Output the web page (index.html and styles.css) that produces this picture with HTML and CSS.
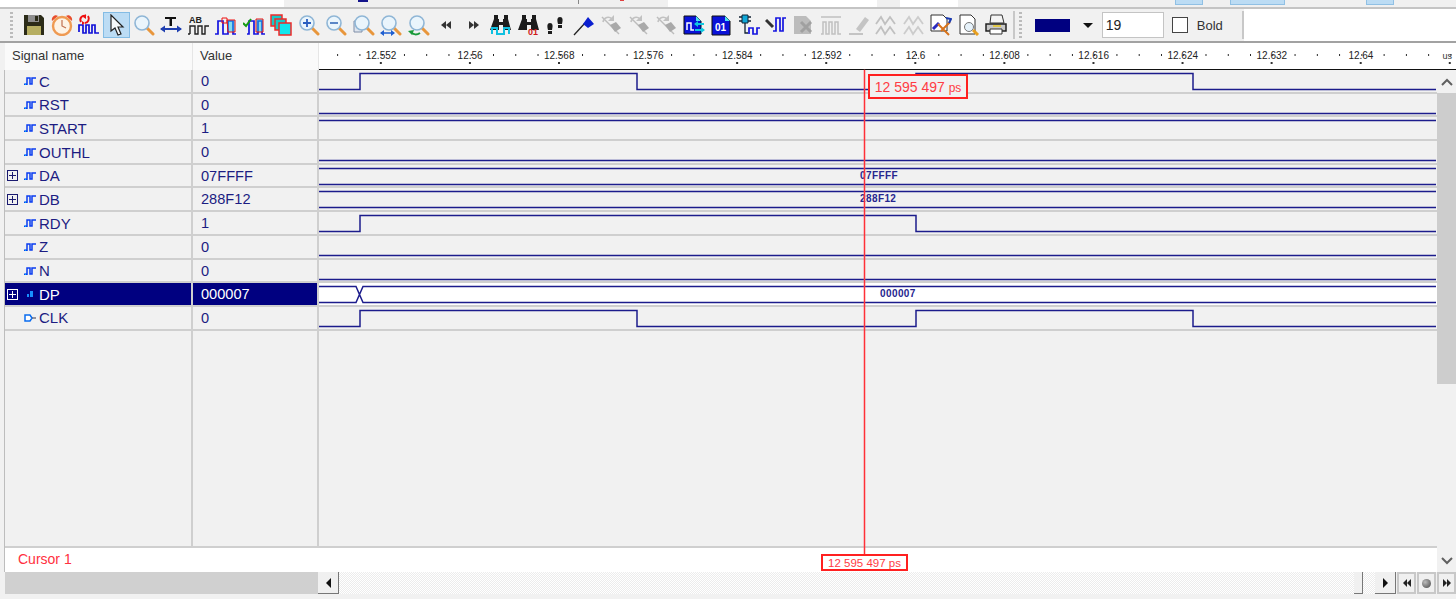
FILE: index.html
```html
<!DOCTYPE html>
<html lang="en">
<head>
  <meta charset="UTF-8" />
  <title>Waveform viewer</title>
  <link rel="stylesheet" href="styles.css">
</head>
<body>

<!-- shared icon parts -->
<svg class="defs" width="0" height="0">
  <symbol id="glass" viewBox="0 0 22 22">
    <path d="M14 14l6 6" stroke="#e8963c" stroke-width="3" stroke-linecap="round"/>
    <circle cx="9" cy="9" r="7" fill="#eaf5fc" stroke="#8fb6d6" stroke-width="1.6"/>
  </symbol>
  <symbol id="binoc" viewBox="0 0 22 22">
    <path d="M4 1h4v4h1v3h4V5h1V1h4v4l3 11H13v-5H9v5H0L4 5z" fill="#1c1c1c"/>
  </symbol>
  <symbol id="grayflag" viewBox="0 0 22 22">
    <path d="M2 3l17 17" stroke="#bdbdbd" stroke-width="1.500"/>
    <path d="M10 11l6-3 5 6-6 4z" fill="#a9a9a9"/>
    <path d="M3 8c1-5 6-6 9-3" fill="none" stroke="#c2c2c2" stroke-width="1.600"/>
    <path d="M14 1v6h-6z" fill="#c2c2c2"/>
  </symbol>
  <symbol id="zig" viewBox="0 0 22 22">
    <path d="M1 10l5-7 4 7 5-7 5 7M1 20l5-7 4 7 5-7 5 7" fill="none" stroke="#c0c0c0" stroke-width="1.800"/>
  </symbol>
  <symbol id="sig" viewBox="0 0 12 8">
    <path d="M0 7.200h3V1h3v6h2V1h4M3 1v6" fill="none" stroke="#0a3cf0" stroke-width="1.500"/>
    <path d="M1 7.200h1" stroke="#00b4ff" stroke-width="1.500"/>
  </symbol>
</svg>

<div class="app">
  <div class="topstrip">
    <div class="seg-white seg-first"></div>
    <div class="seg-gray seg-mid"><i class="speck"></i><i class="speck-line"></i><i class="speck-red"></i></div>
    <div class="seg-white seg-wide"></div>
    <div class="seg-gray seg-gap"></div>
    <div class="seg-white seg-small"></div>
    <div class="seg-gray seg-rest">
      <i class="hi hi-a"></i><i class="hi hi-b"></i><i class="hi hi-c"></i>
    </div>
  </div>

  <div class="toolbar">
    <div class="grip"></div>
    <div class="tools">
      <button class="tool"><svg viewBox="0 0 22 22"><path d="M1 1h17l3 3v17H1z" fill="#2b2b18"/><path d="M5 1h11v7H5z" fill="#8e8e8e"/><path d="M12 2h3v5h-3z" fill="#2b2b18"/><path d="M4 12h14v9H4z" fill="#b6ae62"/></svg></button>
      <button class="tool"><svg viewBox="0 0 22 22"><path d="M1 7c-1-4 3-7 6-5zM21 7c1-4-3-7-6-5z" fill="#e84e2c"/><circle cx="11" cy="12" r="9" fill="#fdf3e6" stroke="#ef9a52" stroke-width="2.400"/><path d="M11 6v6l4 2" fill="none" stroke="#c07050" stroke-width="1.200"/></svg></button>
      <button class="tool"><svg viewBox="0 0 22 22"><path d="M1 18V11h4v8h3v-8h3v8h3v-8h3v8h4" fill="none" stroke="#1010d8" stroke-width="1.700"/><path d="M3 8c-2-4 1-7 5-6M10 2c2 3 0 7-3 7" fill="none" stroke="#ee1111" stroke-width="2"/><path d="M8 0v5l-3-2zM4 7v4l3-2z" fill="#ee1111"/></svg></button>
      <button class="tool tool-on"><svg viewBox="0 0 22 22"><path d="M6 1v16l4-3 3 7 3-1-3-7h5z" fill="#f4f8fb" stroke="#222" stroke-width="1.200"/></svg></button>
      <button class="tool"><svg viewBox="0 0 22 22"><use href="#glass"/></svg></button>
      <button class="tool"><svg viewBox="0 0 22 22"><path d="M5 3h11v2h-4v7H9.500V5H5z" fill="#111"/><path d="M1 15h20" stroke="#1f3fb0" stroke-width="2"/><path d="M0 15l5-3.500v7zM22 15l-5-3.500v7z" fill="#1f3fb0"/></svg></button>
      <button class="tool"><svg viewBox="0 0 22 22"><text x="1" y="9" class="ico-text">AB</text><path d="M2 20v-8h5v8h3v-8h4v8h3v-8h4M0 20h2" fill="none" stroke="#222" stroke-width="1.400"/></svg></button>
      <button class="tool"><svg viewBox="0 0 22 22"><path d="M0 20h3V7h5v13h5V7h5v13h3" fill="none" stroke="#1414e0" stroke-width="1.700"/><path d="M7 4h5v5H7z" fill="none" stroke="#ee1111" stroke-width="1"/><path d="M12 6h8v12h-7z" fill="#18c8e8" fill-opacity=".5" stroke="#ee1111"/></svg></button>
      <button class="tool"><svg viewBox="0 0 22 22"><path d="M4 20h2V7h5v13h4V7h4v13h3" fill="none" stroke="#1414e0" stroke-width="1.700"/><path d="M0 9l3 3 5-7" fill="none" stroke="#149a14" stroke-width="2"/><path d="M13 5h7v13h-7z" fill="#18c8e8" fill-opacity=".5" stroke="#ee1111"/></svg></button>
      <button class="tool"><svg viewBox="0 0 22 22"><path d="M1 1h11v11H1z" fill="#18c8c8" stroke="#ee2a2a" stroke-width="1.500"/><path d="M5 5h11v11H5z" fill="#18c8c8" stroke="#ee2a2a" stroke-width="1.500"/><path d="M9 9h12v12H9z" fill="#12e6ee" stroke="#ee2a2a" stroke-width="1.500"/></svg></button>
      <button class="tool"><svg viewBox="0 0 22 22"><use href="#glass"/><path d="M5 9h8M9 5v8" stroke="#2a5fc0" stroke-width="1.800"/></svg></button>
      <button class="tool"><svg viewBox="0 0 22 22"><use href="#glass"/><path d="M5 9h8" stroke="#4a7ac0" stroke-width="1.800"/></svg></button>
      <button class="tool"><svg viewBox="0 0 22 22"><path d="M1 7h8v11H1z" fill="#dfe5ee" stroke="#7e8ea8"/><use href="#glass"/></svg></button>
      <button class="tool"><svg viewBox="0 0 22 22"><use href="#glass"/><path d="M1 19h13" stroke="#1f5fd0" stroke-width="1.500"/><path d="M0 19l4-3v6zM15 19l-4-3v6z" fill="#1f5fd0"/></svg></button>
      <button class="tool"><svg viewBox="0 0 22 22"><use href="#glass"/><path d="M3 18c2 3 6 3 9 1" fill="none" stroke="#1a9a3a" stroke-width="2"/><path d="M0 17l6-1-2 5z" fill="#1a9a3a"/></svg></button>
      <button class="tool"><svg viewBox="0 0 22 22"><path d="M11 7v8l-5-4zM16 7v8l-5-4z" fill="#333"/></svg></button>
      <button class="tool"><svg viewBox="0 0 22 22"><path d="M6 7v8l5-4zM11 7v8l5-4z" fill="#333"/></svg></button>
      <button class="tool"><svg viewBox="0 0 22 22"><use href="#binoc"/><path d="M2 20v-6h5v6h7v-6h5v6" fill="none" stroke="#10c0e0" stroke-width="2"/></svg></button>
      <button class="tool"><svg viewBox="0 0 22 22"><use href="#binoc"/><text x="10" y="20.500" class="ico-red">01</text></svg></button>
      <button class="tool"><svg viewBox="0 0 22 22"><path d="M5 9c3 0 3 3 2 7H3c-1-4-1-7 2-7zM3 17h4v3H3zM15 3c3 0 3 3 2 7h-4c-1-4-1-7 2-7zM13 11h4v3h-4z" fill="#1c1c1c"/></svg></button>
      <button class="tool"><svg viewBox="0 0 22 22"><path d="M1 21L12 9" stroke="#222" stroke-width="1.300"/><path d="M10 10l5-7 6 7-6 4z" fill="#0b1fd0"/></svg></button>
      <button class="tool"><svg viewBox="0 0 22 22"><use href="#grayflag"/></svg></button>
      <button class="tool"><svg viewBox="0 0 22 22"><use href="#grayflag"/></svg></button>
      <button class="tool"><svg viewBox="0 0 22 22"><use href="#grayflag"/></svg></button>
      <button class="tool"><svg viewBox="0 0 22 22"><path d="M1 2h12l5 5v13H1z" fill="#0a12d8" stroke="#111"/><path d="M4 16v-7h4v7h3" fill="none" stroke="#fff" stroke-width="1.500"/><path d="M12 10h9M12 16h9" stroke="#10c8e0" stroke-width="2"/><path d="M11 10l4-3v6zM22 16l-4-3v6z" fill="#10c8e0"/><path d="M13 2v5h5z" fill="#50e0f0"/></svg></button>
      <button class="tool"><svg viewBox="0 0 22 22"><path d="M2 2h13l5 5v14H2z" fill="#0a12d8" stroke="#111"/><path d="M15 2v5h5z" fill="#50e0f0"/><text x="5" y="17" class="ico-white">01</text></svg></button>
      <button class="tool"><svg viewBox="0 0 22 22"><path d="M4 1h6v8H4z" fill="#10a8d8" stroke="#123"/><path d="M1 3h3M1 7h3M10 3h3M10 7h3M7 9v10h3" fill="none" stroke="#123" stroke-width="1.300"/><path d="M11 20v-6h4v6h4v-6h3" fill="none" stroke="#1414e0" stroke-width="1.700"/></svg></button>
      <button class="tool"><svg viewBox="0 0 22 22"><path d="M1 6l7 7" stroke="#333" stroke-width="3"/><path d="M8 17h3V4h4v13h3V4h3" fill="none" stroke="#1414e0" stroke-width="1.700"/></svg></button>
      <button class="tool"><svg viewBox="0 0 22 22"><path d="M1 2h12l5 5v13H1z" fill="#bcbcbc"/><path d="M8 8l10 10M18 8L8 18" stroke="#a0a0a0" stroke-width="3"/></svg></button>
      <button class="tool"><svg viewBox="0 0 22 22"><path d="M1 3h20M1 20h2V8h3v12h3V8h3v12h3V8h3v12h3" fill="none" stroke="#c0c0c0" stroke-width="1.500"/></svg></button>
      <button class="tool"><svg viewBox="0 0 22 22"><path d="M8 15L17 3l4 3-9 12z" fill="#c4c4c4"/><path d="M1 20h14" stroke="#c4c4c4" stroke-width="2"/></svg></button>
      <button class="tool"><svg viewBox="0 0 22 22"><use href="#zig"/></svg></button>
      <button class="tool"><svg viewBox="0 0 22 22"><use href="#zig" opacity=".75"/></svg></button>
      <button class="tool"><svg viewBox="0 0 22 22"><path d="M1 1h12l4 4v12H1z" fill="#fff" stroke="#333"/><path d="M3 15l6-6" stroke="#2a2ac0" stroke-width="3"/><path d="M8 10l11 11M20 8l-9 9" stroke="#d8741c" stroke-width="2"/><path d="M16 4l5 1-2 4" fill="none" stroke="#1a3ab0" stroke-width="2"/></svg></button>
      <button class="tool"><svg viewBox="0 0 22 22"><path d="M2 1h11l4 4v15H2z" fill="#fff" stroke="#333"/><circle cx="11" cy="13" r="4.500" fill="#e6f2fa" stroke="#777"/><path d="M15 16l5 5" stroke="#e8a020" stroke-width="3"/></svg></button>
      <button class="tool"><svg viewBox="0 0 22 22"><path d="M6 1h11l2 8H5z" fill="#f4f4f4" stroke="#333"/><path d="M1 10h20v7H1z" fill="#c8c8c8" stroke="#222" stroke-width="1.500"/><path d="M5 15h12v5H5z" fill="#fff" stroke="#333"/><path d="M8 12h8" stroke="#e8c820" stroke-width="1.500"/></svg></button>
    </div>
    <div class="sep"></div>
    <div class="grip grip-2"></div>
    <div class="swatch"></div>
    <div class="drop"></div>
    <div class="size-box">19</div>
    <div class="check"></div>
    <div class="check-label">Bold</div>
    <div class="sep sep-end"></div>
    <div class="bar-blank"></div>
  </div>
  <div class="band"></div>

  <div class="head">
    <div class="hcell hname">Signal name</div>
    <div class="hcell hvalue">Value</div>
    <div class="ruler">
      <div class="ruler-labels">
        <span>12.552</span><span>12.56</span><span>12.568</span><span>12.576</span>
        <span>12.584</span><span>12.592</span><span>12.6</span><span>12.608</span>
        <span>12.616</span><span>12.624</span><span>12.632</span><span>12.64</span>
      </div>
      <span class="unit">us</span>
    </div>
  </div>

  <div class="middle">
    <div class="rows">
      <div class="row">
        <div class="name"><i class="noex"></i><svg class="sig"><use href="#sig"/></svg>C</div>
        <div class="val">0</div>
        <div class="wave"><svg viewBox="0 0 1118 22"><path d="M0 19.500H41V3.500H318V19.500H597V3.500H874V19.500H1117"/></svg></div>
      </div>
      <div class="row">
        <div class="name"><i class="noex"></i><svg class="sig"><use href="#sig"/></svg>RST</div>
        <div class="val">0</div>
        <div class="wave"><svg viewBox="0 0 1118 22"><path d="M0 19.500H1117"/></svg></div>
      </div>
      <div class="row">
        <div class="name"><i class="noex"></i><svg class="sig"><use href="#sig"/></svg>START</div>
        <div class="val">1</div>
        <div class="wave"><svg viewBox="0 0 1118 22"><path d="M0 3.500H1117"/></svg></div>
      </div>
      <div class="row">
        <div class="name"><i class="noex"></i><svg class="sig"><use href="#sig"/></svg>OUTHL</div>
        <div class="val">0</div>
        <div class="wave"><svg viewBox="0 0 1118 22"><path d="M0 19.500H1117"/></svg></div>
      </div>
      <div class="row">
        <div class="name"><i class="ex"></i><svg class="sig"><use href="#sig"/></svg>DA</div>
        <div class="val">07FFFF</div>
        <div class="wave"><svg viewBox="0 0 1118 22"><path d="M0 3.500H1117M0 19.500H1117"/><text x="541" y="14">07FFFF</text></svg></div>
      </div>
      <div class="row">
        <div class="name"><i class="ex"></i><svg class="sig"><use href="#sig"/></svg>DB</div>
        <div class="val">288F12</div>
        <div class="wave"><svg viewBox="0 0 1118 22"><path d="M0 3.500H1117M0 19.500H1117"/><text x="541" y="14">288F12</text></svg></div>
      </div>
      <div class="row">
        <div class="name"><i class="noex"></i><svg class="sig"><use href="#sig"/></svg>RDY</div>
        <div class="val">1</div>
        <div class="wave"><svg viewBox="0 0 1118 22"><path d="M0 19.500H41V3.500H597V19.500H1117"/></svg></div>
      </div>
      <div class="row">
        <div class="name"><i class="noex"></i><svg class="sig"><use href="#sig"/></svg>Z</div>
        <div class="val">0</div>
        <div class="wave"><svg viewBox="0 0 1118 22"><path d="M0 19.500H1117"/></svg></div>
      </div>
      <div class="row">
        <div class="name"><i class="noex"></i><svg class="sig"><use href="#sig"/></svg>N</div>
        <div class="val">0</div>
        <div class="wave"><svg viewBox="0 0 1118 22"><path d="M0 19.500H1117"/></svg></div>
      </div>
      <div class="row row-sel">
        <div class="name"><i class="ex"></i><svg class="sig-bus" viewBox="0 0 12 8"><path d="M3 4h2v3H3zM6 1h3v6H6z" fill="#1890ff"/></svg>DP</div>
        <div class="val">000007</div>
        <div class="wave"><svg viewBox="0 0 1118 22"><path d="M0 3.500H37L44 19.500H1117M0 19.500H37L44 3.500H1117"/><text x="561" y="14">000007</text></svg></div>
      </div>
      <div class="row">
        <div class="name"><i class="noex"></i><svg class="sig" viewBox="0 0 12 8"><path d="M1 1h5l2 3-2 3H1z" fill="#fff" stroke="#0a6cf0" stroke-width="1.500"/><path d="M8 4h4" stroke="#556" stroke-width="1.200"/></svg>CLK</div>
        <div class="val">0</div>
        <div class="wave"><svg viewBox="0 0 1118 22"><path d="M0 19.500H41V3.500H318V19.500H597V3.500H874V19.500H1117"/></svg></div>
      </div>
      <div class="filler">
        <div class="name"></div>
        <div class="val"></div>
        <div class="wave"></div>
      </div>
      <div class="cursor-row">Cursor 1</div>
    </div>

    <div class="vscroll">
      <div class="vbtn"><svg viewBox="0 0 12 8"><path d="M1 7l5-5 5 5" /></svg></div>
      <div class="vthumb"></div>
      <div class="vtrack"></div>
      <div class="vbtn"><svg viewBox="0 0 12 8"><path d="M1 1l5 5 5-5" /></svg></div>
    </div>

    <div class="cursor-line"></div>
    <div class="flag flag-top">12 595 497 <small>ps</small></div>
    <div class="flag flag-bottom">12 595 497 ps</div>
  </div>

  <div class="hscroll">
    <div class="hleft"></div>
    <div class="sbtn"><i class="arrow-l"></i></div>
    <div class="htrack"><div class="hthumb"></div></div>
    <div class="sbtn"><i class="arrow-r"></i></div>
    <div class="nav"><i class="arrow-s-l"></i><i class="arrow-s-l"></i></div>
    <div class="nav"><i class="ball"></i></div>
    <div class="nav"><i class="arrow-s-r"></i><i class="arrow-s-r"></i></div>
  </div>
  <div class="foot"></div>
</div>
</body>
</html>
```

FILE: styles.css
```css
html, body {
  margin: 0;
  height: 100%;
  overflow: hidden;
}
body {
  background: #f1f1f1;
  font-family: "Liberation Sans", Arial, sans-serif;
  color: #1c1c82;
}
.defs {
  position: absolute;
}
.app {
  display: flex;
  flex-direction: column;
  width: 1456px;
  height: 599px;
}

/* strip of the toolbar row above, cut off by the window */
.topstrip {
  display: flex;
  height: 7px;
  flex: none;
  border-bottom: 2px solid #c4c4c4;
}
.seg-white { background: #fff; }
.seg-gray { background: #f0f0f0; position: relative; }
.seg-first { width: 284px; }
.seg-mid { width: 384px; }
.seg-wide { width: 209px; }
.seg-gap { width: 23px; }
.seg-small { width: 58px; }
.seg-rest { flex: 1; position: relative; }
.speck {
  position: absolute;
  left: 74px;
  top: 0;
  width: 10px;
  height: 2px;
  background: #14148c;
}
.speck-line {
  position: absolute;
  left: 294px;
  top: 0;
  width: 1px;
  height: 4px;
  background: #888;
}
.speck-red {
  position: absolute;
  left: 336px;
  top: 0;
  width: 4px;
  height: 1px;
  background: #e04040;
}
.hi {
  position: absolute;
  top: 0;
  height: 4px;
  background: #bcdcf4;
  border: 1px solid #90c0e4;
  border-top: none;
}
.hi-a { left: 217px; width: 26px; }
.hi-b { left: 272px; width: 53px; }
.hi-c { left: 408px; width: 26px; }

/* toolbar */
.toolbar {
  display: flex;
  align-items: center;
  height: 32px;
  flex: none;
  padding-left: 10px;
}
.grip {
  width: 3px;
  height: 26px;
  background: repeating-linear-gradient(#bbb 0 2px, transparent 2px 4px);
}
.tools {
  display: flex;
  margin-left: 7.300px;
}
.tool {
  width: 27.490px;
  height: 26px;
  padding: 0;
  border: 1px solid transparent;
  background: none;
  display: flex;
  align-items: center;
  justify-content: center;
}
.tool svg {
  width: 22px;
  height: 22px;
  display: block;
  flex: none;
}
.tool-on {
  background: #bcdcf4;
  border-color: #84bce4;
}
.ico-text {
  font: 700 9px "Liberation Sans", sans-serif;
  fill: #222;
}
.ico-red {
  font: 700 9px "Liberation Sans", sans-serif;
  fill: #d01818;
}
.ico-white {
  font: 700 10px "Liberation Sans", sans-serif;
  fill: #fff;
}
.sep {
  width: 2px;
  height: 28px;
  margin-left: 3px;
  background: #c8c8c8;
}
.grip-2 {
  margin-left: 4px;
}
.swatch {
  width: 35px;
  height: 13px;
  margin-left: 13px;
  background: #000080;
}
.drop {
  width: 0;
  height: 0;
  margin-left: 13px;
  border-left: 5px solid transparent;
  border-right: 5px solid transparent;
  border-top: 5px solid #111;
}
.size-box {
  width: 57px;
  height: 24px;
  margin-left: 9px;
  padding-left: 3px;
  background: #fff;
  border: 1px solid #c4c4c4;
  font-size: 14px;
  line-height: 24px;
  color: #222;
}
.check {
  width: 14px;
  height: 14px;
  margin-left: 8px;
  background: #fff;
  border: 1px solid #444;
}
.check-label {
  margin-left: 9px;
  font-size: 13px;
  color: #333;
}
.sep-end {
  margin-left: 19px;
  margin-right: 0;
}
.bar-blank {
  flex: 1;
  height: 32px;
  background: #fff;
}
.band {
  height: 2px;
  flex: none;
  background: #a2a2a2;
}

/* header + ruler */
.head {
  display: flex;
  height: 27px;
  flex: none;
  padding-left: 5px;
}
.hcell {
  font-size: 13px;
  line-height: 26px;
  color: #333;
  background: #fafafa;
  border-right: 1px solid #e6e6e6;
}
.hname {
  width: 180px;
  padding-left: 7px;
}
.hvalue {
  width: 118px;
  padding-left: 7px;
}
.ruler {
  flex: 1;
  display: flex;
  justify-content: space-between;
  background-color: #fff;
  background-image:
    radial-gradient(circle, #222 0 1px, transparent 1px),
    radial-gradient(circle, #333 0 1px, transparent 1px);
  background-size: 22.270px 2px, 89.090px 2px;
  background-repeat: repeat-x;
  background-position: 7.500px 11px, 17.300px 19px;
  border-bottom: 1px solid #111;
  box-sizing: border-box;
}
.ruler-labels {
  display: flex;
  padding-left: 17.500px;
}
.ruler-labels span {
  width: 89.090px;
  text-align: center;
  font-size: 10px;
  line-height: 25px;
  color: #222;
  white-space: nowrap;
}
.unit {
  font-size: 9px;
  line-height: 27px;
  padding-right: 4px;
  color: #333;
}

/* rows */
.middle {
  position: relative;
  display: flex;
  flex: 1;
  min-height: 0;
  padding-left: 4px;
}
.middle::before {
  content: "";
  width: 1px;
  background: #bdbdbd;
}
.rows {
  flex: 1;
  display: flex;
  flex-direction: column;
}
.row, .filler {
  display: grid;
  grid-template-columns: 188px 126px 1fr;
  box-sizing: border-box;
  flex: none;
}
.row {
  height: 23.700px;
  border-bottom: 2px solid #cfcfcf;
}
.filler {
  flex: 1;
  border-bottom: 2px solid #cfcfcf;
}
.name {
  display: flex;
  align-items: center;
  padding-left: 2px;
  font-size: 15px;
  border-right: 2px solid #cfcfcf;
}
.val {
  padding-left: 8px;
  font-size: 14.600px;
  line-height: 22px;
  border-right: 2px solid #cfcfcf;
}
.ex, .noex {
  display: block;
  box-sizing: border-box;
  width: 11px;
  height: 11px;
  flex: none;
  margin-right: 6px;
}
.ex {
  border: 1px solid #1a1a70;
  background:
    linear-gradient(#1a1a70, #1a1a70) center / 7px 1px no-repeat,
    linear-gradient(#1a1a70, #1a1a70) center / 1px 7px no-repeat;
}
.sig, .sig-bus {
  width: 12px;
  height: 8px;
  flex: none;
  margin-right: 3px;
}
.wave svg {
  display: block;
  width: 1118px;
  height: 22px;
}
.wave path {
  fill: none;
  stroke: #1c1c8c;
  stroke-width: 1.500;
}
.wave text {
  font-size: 10px;
  font-weight: 700;
  letter-spacing: 0.400px;
  fill: #26268e;
  stroke: none;
}
.row-sel .name, .row-sel .val {
  background: #000080;
  color: #fff;
}
.row-sel .ex {
  border-color: #fff;
  background:
    linear-gradient(#fff, #fff) center / 7px 1px no-repeat,
    linear-gradient(#fff, #fff) center / 1px 7px no-repeat;
}
.row-sel .wave {
  background: #fff;
}
.cursor-row {
  height: 24px;
  flex: none;
  padding-left: 13px;
  background: #fff;
  color: #ff3040;
  font-size: 14px;
  line-height: 23px;
}

/* vertical scrollbar */
.vscroll {
  width: 19px;
  flex: none;
  display: flex;
  flex-direction: column;
}
.vbtn {
  height: 23px;
  display: flex;
  align-items: center;
  justify-content: center;
}
.vbtn svg {
  width: 12px;
  height: 8px;
}
.vbtn path {
  fill: none;
  stroke: #606060;
  stroke-width: 2;
}
.vthumb {
  height: 291px;
  background: #cdcdcd;
}
.vtrack {
  flex: 1;
}

/* cursor */
.cursor-line {
  position: absolute;
  left: 864px;
  top: 0;
  width: 1px;
  height: 485px;
  background: #ff3038;
  box-shadow: 0 0 0 0.300px #ff5058;
}
.flag {
  position: absolute;
  box-sizing: border-box;
  border: 2px solid #ff2020;
  color: #ff3c44;
  white-space: nowrap;
  text-align: center;
}
.flag-top {
  left: 868px;
  top: 4px;
  width: 100px;
  height: 25px;
  background: #f1f1f1;
  font-size: 14px;
  line-height: 22px;
}
.flag-top small {
  font-size: 12px;
}
.flag-bottom {
  left: 821px;
  top: 484px;
  width: 87px;
  height: 17px;
  background: #fff;
  font-size: 11.500px;
  line-height: 14px;
}

/* horizontal scrollbar */
.hscroll {
  display: flex;
  height: 22px;
  flex: none;
  padding-left: 5px;
}
.hleft {
  width: 313px;
  background: #d0d0d0;
}
.sbtn {
  width: 21px;
  box-sizing: border-box;
  background: #f0f0f0;
  border-right: 1px solid #777;
  border-bottom: 1px solid #777;
  display: flex;
  align-items: center;
  justify-content: center;
}
.htrack {
  flex: 1;
  display: flex;
  justify-content: flex-end;
  padding-right: 12px;
  background: repeating-conic-gradient(#fff 0 25%, #ececec 0 50%) 0 0 / 2px 2px;
}
.hthumb {
  width: 9px;
  box-sizing: border-box;
  background: #f0f0f0;
  border-right: 1px solid #777;
  border-bottom: 1px solid #777;
}
.nav {
  width: 19px;
  box-sizing: border-box;
  margin-left: 1px;
  background: #f0f0f0;
  border: 2px solid #c8c8c8;
  display: flex;
  align-items: center;
  justify-content: center;
}
.arrow-l, .arrow-r, .arrow-s-l, .arrow-s-r {
  width: 0;
  height: 0;
  border-top: 5px solid transparent;
  border-bottom: 5px solid transparent;
}
.arrow-l { border-right: 5px solid #111; }
.arrow-r { border-left: 5px solid #111; }
.arrow-s-l, .arrow-s-r {
  border-top-width: 4px;
  border-bottom-width: 4px;
}
.arrow-s-l { border-right: 4px solid #222; }
.arrow-s-r { border-left: 4px solid #222; }
.ball {
  width: 9px;
  height: 9px;
  border-radius: 50%;
  background: radial-gradient(circle at 35% 35%, #bbb, #444);
}
.foot {
  height: 5px;
  flex: none;
}
```
